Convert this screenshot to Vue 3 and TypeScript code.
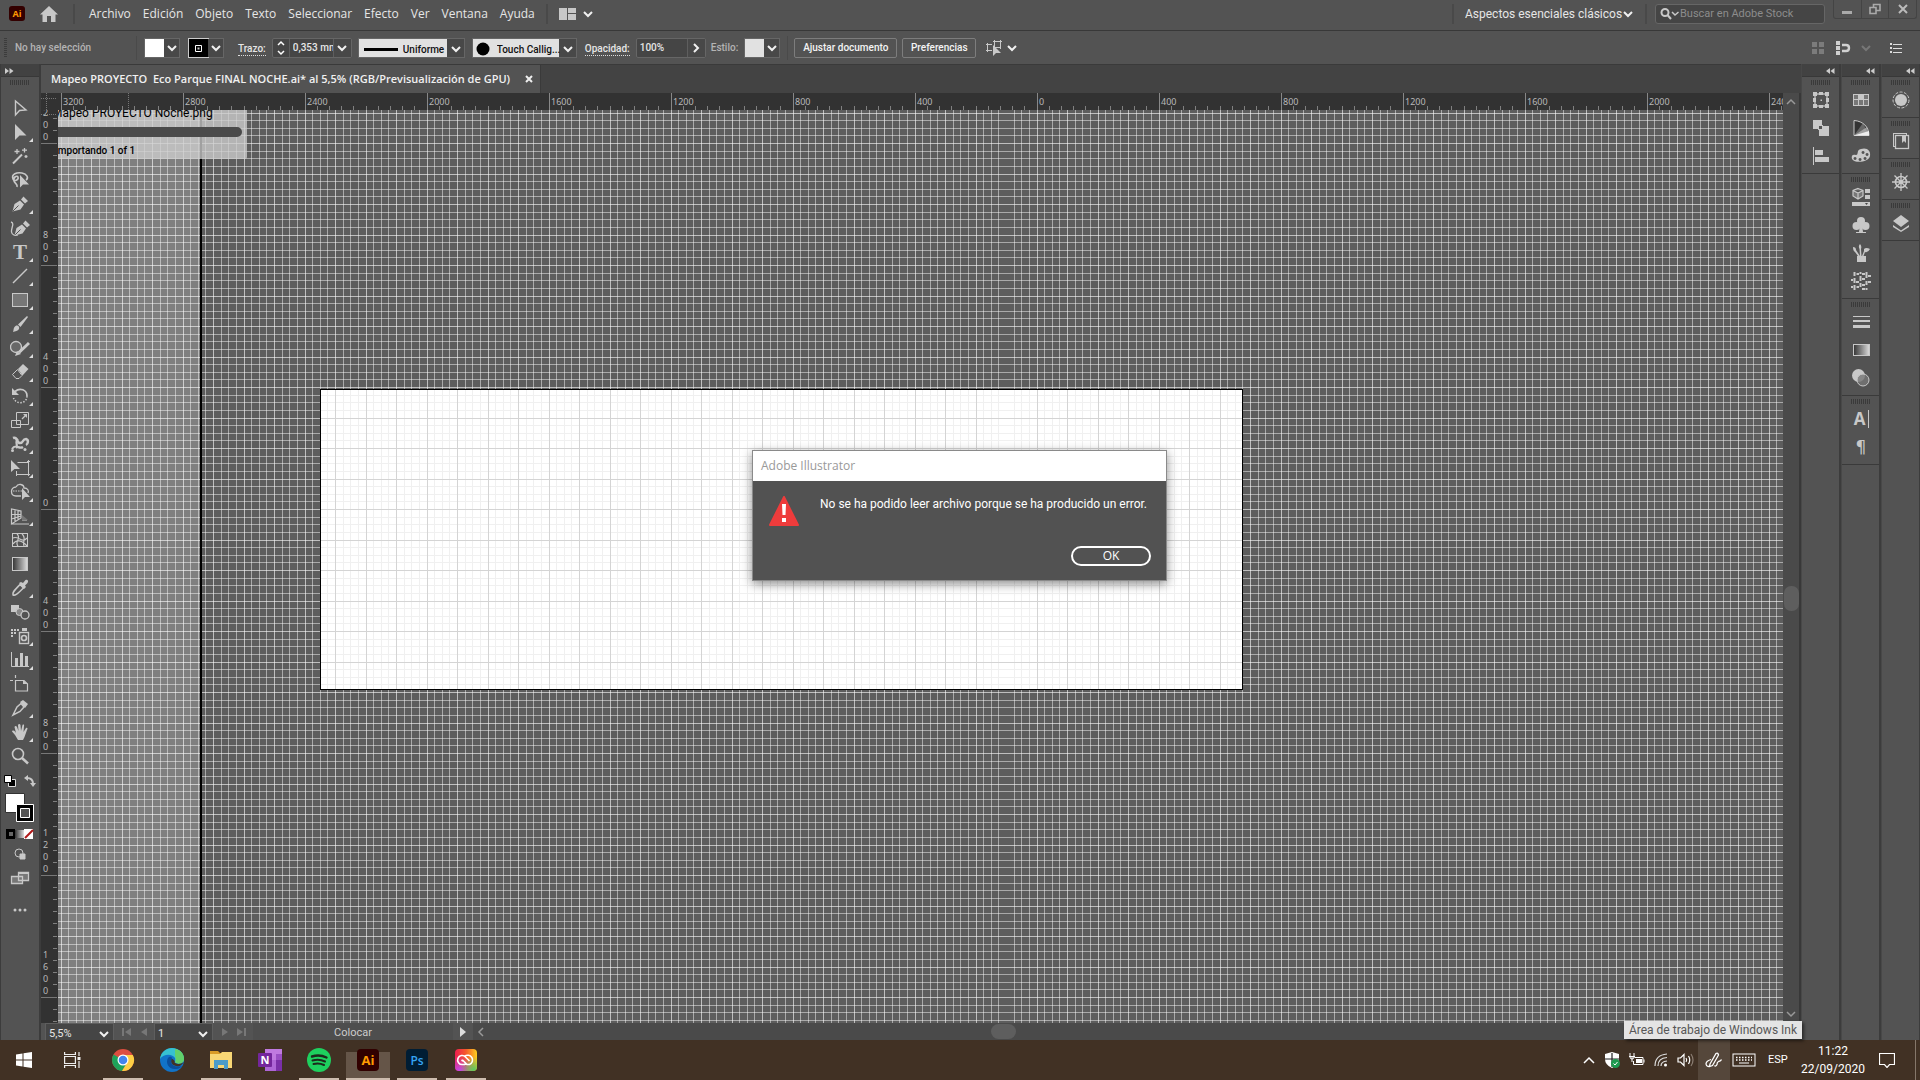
<script setup lang="ts">
interface Tool { name: string; icon: string; more?: boolean }
interface TaskApp { name: string; icon: string; open?: boolean; active?: boolean }

const F = 'fill="currentColor" stroke="none"'

const menus: string[] = ['Archivo', 'Edición', 'Objeto', 'Texto', 'Seleccionar', 'Efecto', 'Ver', 'Ventana', 'Ayuda']

const nib = 'M2.5 17.5L4.5 10L10 6.5L14 10.5L10.5 15.5ZM11 5.5L13.5 2.5L18 7L15 9.5Z'

const tools: Tool[] = [
  { name: 'Selección', icon: `<path stroke-width="1.4" d="M5.5 3V17L9.5 12.5L16 12Z"/>` },
  { name: 'Selección directa', more: true, icon: `<path ${F} d="M5 2V18L9.5 13.5H16.5Z"/>` },
  { name: 'Varita mágica', icon: `<path stroke-width="2" d="M3 17.5L12 8.5"/><path stroke-width="1.3" d="M7 3V8M4.5 5.5H9.5M14.5 2V6.5M12 4.2H17M16 9V12M14.5 10.5H17.5"/>` },
  { name: 'Lazo', icon: `<path stroke-width="1.6" d="M3 9C1 4 7 2 12 3C17 4 19 8 16 10M3 9C4 12 9 10 8 7C7 5 3 7 4 11C5 14 8 14 7 17"/><path ${F} d="M10 5V17.5L13 14.5H19Z"/>` },
  { name: 'Pluma', more: true, icon: `<path ${F} d="${nib}"/><path stroke="#535353" d="M3 17L8.5 11.5"/>` },
  { name: 'Curvatura', icon: `<g transform="translate(2 0)"><path ${F} d="${nib}"/><path stroke="#535353" d="M3 17L8.5 11.5"/></g><path stroke-width="1.3" d="M1 4C5 5 1 10 1.5 14C2 17 5 18 8 17"/>` },
  { name: 'Texto', more: true, icon: `<text x="10" y="17" text-anchor="middle" font-family="Liberation Serif, serif" font-weight="700" font-size="21" ${F}>T</text>` },
  { name: 'Segmento de línea', more: true, icon: `<path stroke-width="1.4" d="M3 17L17 3"/>` },
  { name: 'Rectángulo', more: true, icon: `<rect x="2.5" y="3.5" width="15" height="13" fill="#777"/>` },
  { name: 'Pincel', more: true, icon: `<path ${F} d="M3 18C4 16 3 14 5.5 12C8 10.5 10 13 9 15C8 17 5 17.5 3 18ZM8 10.5L17 2L18 3L10.5 13Z"/>` },
  { name: 'Shaper', more: true, icon: `<circle cx="6" cy="9" r="5.5" fill="#686868" stroke-width="1.3"/><path stroke-width="3" d="M9 14.5L19 5"/><path ${F} d="M5 18L7 13L11 16Z"/>` },
  { name: 'Borrador', more: true, icon: `<path ${F} d="M8 7L13 2L18.5 7L12.5 13.5Z"/><path d="M7.5 7.5L12 13.5L9 16.5H6L2.5 12.5Z"/>` },
  { name: 'Rotar', more: true, icon: `<path stroke-width="1.7" d="M5 5.5C10 1 17 4 17 10"/><path stroke-width="1.5" stroke-dasharray="1.5 1.5" d="M17 10C17 18 6 19 3.5 12"/><path ${F} d="M2 2V9H9Z"/>` },
  { name: 'Escala', more: true, icon: `<path d="M6.5 2.5H18.5V14.5H6.5ZM1.5 10.5H10.5V17.5H1.5Z"/><path stroke-width="1.3" d="M12 9L16 5"/><path ${F} d="M13 4H17V8Z"/>` },
  { name: 'Anchura', more: true, icon: `<path stroke-width="2.5" d="M3 4C8 2 6 9 10 9C14 9 12 5 16 5C19 6 18 10 16 11"/><path stroke-width="2.2" d="M2 15C6 9 9 16 13 13M8 5C4 9 9 11 6 14"/><circle ${F} cx="2.5" cy="16.5" r="1.5"/><circle ${F} cx="15" cy="15.5" r="1.5"/>` },
  { name: 'Transformación libre', more: true, icon: `<path ${F} d="M1 2V14L4.5 11H10Z"/><path d="M7.5 4.5H18.5V16.5H6.5V13M17 3.5h3M17 16.5h3M6.5 15v3M18.5 15v3M18.5 2v3"/>` },
  { name: 'Creador de formas', more: true, icon: `<path stroke-width="1.3" d="M6 5C0 5 0 14 6 14H11M6 5C8 1 14 2 14 6C18 6 19 9 18 11"/><path stroke-dasharray="1.5 1" d="M3 9H13"/><path ${F} d="M12 6V18L15 15H20Z"/>` },
  { name: 'Cuadrícula de perspectiva', more: true, icon: `<path stroke-width="1.2" d="M1.5 3V18L11 12V5ZM5 3.5V16M8 4V14M1.5 8.5L11 8.5M1.5 13L11 10M2 18H19M12 14H17"/><path fill="#777" stroke="none" d="M12 9L18 14H12Z"/>` },
  { name: 'Malla', icon: `<rect x="2.5" y="3.5" width="15" height="13"/><path stroke-width="1.2" d="M3 8C8 5 12 14 17 8M3 14C6 9 12 10 17 16M7 4C12 8 4 12 8 16M12 4C17 8 12 12 14 16"/>` },
  { name: 'Degradado', icon: `<rect x="2.5" y="3.5" width="15" height="13" fill="url(#grad-tool)"/>` },
  { name: 'Cuentagotas', more: true, icon: `<path stroke-width="1.5" d="M3 17C2 14 5 12 10 6.5L13.5 10C8 15 6 18 3 17Z"/><path ${F} d="M9 5L11 4L13 5L15.5 2C17.5 1 19 3 17.5 5L15 7.5L16 9L14 11Z"/>` },
  { name: 'Fusión', icon: `<rect ${F} x="1" y="3" width="8" height="7"/><circle cx="9.5" cy="10" r="3.5" fill="#888"/><circle cx="15" cy="13" r="4" fill="#535353" stroke-width="1.3"/>` },
  { name: 'Rociar símbolos', more: true, icon: `<rect x="9.5" y="6.5" width="9" height="11" stroke-width="1.4"/><circle cx="14" cy="12" r="2.5" stroke-width="1.7"/><path ${F} d="M12 2h5v3h-5zM1 3h2v2h-2zM4 3h2v2h-2zM7 3h2v2h-2zM1 6h2v2h-2zM4 6h2v2h-2zM1 9h2v2h-2z"/>` },
  { name: 'Gráfica de columnas', more: true, icon: `<path d="M1.5 2V16.5H19"/><path ${F} d="M5 8h3v8h-3zM10 3h3v13h-3zM15 6h3v10h-3z"/>` },
  { name: 'Mesa de trabajo', icon: `<path stroke-width="1.2" d="M5.5 1V4M0 6.5H3M5.5 6.5H14L17.5 10V17H5.5Z"/><path ${F} d="M13 6V10H18Z"/>` },
  { name: 'Sector', more: true, icon: `<path stroke-width="1.5" d="M3 17L7 9L11 5.5L14 9L10 13.5Z"/><path ${F} d="M10 4L13 2L18 6L15 10Z"/>` },
  { name: 'Mano', more: true, icon: `<path ${F} d="M8 18L5 13L2 9.5C2 8 4 8 5 9.5L6 11L4.5 5C5 3.5 6.5 4 7 5L8.5 9L8 3C8.5 1.5 10 1.5 10.5 3L11 9L12.5 3C13.5 2 14.5 3 14 4L13.5 10L16 6C17.5 5 18 6.5 17 8L14.5 15L13 18Z"/>` },
  { name: 'Zoom', icon: `<circle cx="8" cy="8" r="5.5" stroke-width="1.6"/><path stroke-width="2.5" d="M12 12L18 17.5"/>` },
]

const dockIcons = {
  transform: `<rect x="4" y="4" width="12" height="12" stroke-width="1.3"/><path ${F} d="M2 2h4v4h-4zM8 2h4v3h-4zM14 2h4v4h-4zM2 8h3v4h-3zM15 8h3v4h-3zM2 14h4v4h-4zM8 15h4v3h-4zM14 14h4v4h-4zM9.5 9.5h1.5v1.5h-1.5z"/>`,
  pathfinder: `<path ${F} d="M2 2H11V7H8V11H2ZM12 8H18V18H8V12H12Z"/><rect x="7.5" y="7.5" width="4" height="4"/>`,
  align: `<path d="M2.5 1V19"/><path ${F} d="M4 4h8v5h-8zM4 11h14v5h-14z"/>`,
  swatches: `<rect x="2" y="4" width="16" height="12" ${F}/><path fill="#777" stroke="none" d="M3 5h4v4h-4zM13 5h4v4h-4zM8 10h4v5h-4zM3 10h4v5h-4zM13 10h4v5h-4z"/>`,
  guide: `<path d="M3 2.5V17.5H18C18 9 12 3 3 2.5Z" fill="#333"/><path ${F} d="M3 17.5L12 5L18 17.5Z" opacity=".35"/><path ${F} d="M3 17.5L16 9L18 17.5Z" opacity=".6"/><path fill="#eee" stroke="none" d="M3 17.5L18 13L18 17.5Z"/>`,
  palette: `<path fill-rule="evenodd" ${F} d="M1 13C0 9 2 8 5 9C8 9 5 4 10 3C16 1 20 5 19 10C18 16 4 18 1 13ZM12 5a1.5 1.5 0 1 0 .1 0ZM16 7a1.5 1.5 0 1 0 .1 0ZM4 11a1.5 1.5 0 1 0 .1 0ZM9 12a1.5 1.5 0 1 0 .1 0ZM14 11a1.5 1.5 0 1 0 .1 0Z"/>`,
  library: `<path stroke-width="1.2" fill="#777" d="M7 1.5L12 3.5V9L7 12L2 9V3.5ZM2 3.5L7 6L12 3.5M7 6V12"/><path ${F} d="M14 2h5v4h-5zM14 8h5v4h-5zM1 15h18v4h-18z"/><path fill="#444" stroke="none" d="M14 16h3l-1.5 2z"/>`,
  symbols: `<circle ${F} cx="10" cy="6" r="4"/><circle ${F} cx="5.5" cy="11" r="4"/><circle ${F} cx="14.5" cy="11" r="4"/><path ${F} d="M9 9h2l1 8h3v1h-10v-1h3z"/>`,
  brushes: `<path ${F} d="M6 13h9v6h-9zM2 4Q5 4 5 7L9 13H7L4 9Q2 8 2 4ZM9 1Q11 3 10 6L10.500 13H9L8.500 6Q7 3 9 1ZM13 6Q15 4 19 6Q17 10 14 9L12.500 13H11L13 8Z"/>`,
  pattern: `<path stroke-width="2" d="M3.5 1V5M3.5 7V12M3.5 14V19M9.500 1V3M9.500 5V10M9.500 12V16M15.500 1V7M15.500 10V14M15.500 17V19M5.500 3H8M11 3H14M17 5H20M0 9H2M5 11H8M11 8H14M17 11H20M0 16H2M5.500 16H8M11 14H14M11 18H14"/>`,
  stroke: `<path ${F} d="M2 4h17v1h-17zM2 8h17v2h-17zM2 13h17v3h-17z"/>`,
  gradient: `<rect x="2.5" y="4.5" width="16" height="11" fill="url(#grad-tool)"/>`,
  transparency: `<circle ${F} cx="7.5" cy="7.5" r="6.5"/><circle cx="12" cy="12" r="6" fill="#777" fill-opacity=".8"/>`,
  character: `<text x="8.5" y="16" text-anchor="middle" font-family="Open Sans, sans-serif" font-weight="700" font-size="17" ${F}>A</text><path d="M17.5 1V19"/>`,
  paragraph: `<text x="10" y="15.5" text-anchor="middle" font-family="DejaVu Sans, sans-serif" font-size="17" ${F}>¶</text>`,
  appearance: `<circle ${F} cx="10" cy="10" r="6"/><circle cx="10" cy="10" r="8" stroke-dasharray="3 1.5"/>`,
  styles: `<rect x="2.5" y="2.5" width="13" height="13"/><rect x="4.5" y="4.5" width="13" height="13" fill="#535353" stroke-width="1.3"/><path ${F} d="M11 4h4v8l-2-2-2 2z"/>`,
  navigator: `<circle cx="10" cy="10" r="5.5" stroke-width="1.7"/><circle ${F} cx="10" cy="10" r="2"/><path stroke-width="1.3" d="M10 1V19M1 10H19M3.5 3.5L16.5 16.5M16.5 3.5L3.5 16.5"/>`,
  layers: `<path ${F} d="M10 2L18 8L10 14L2 8ZM2 12L10 17.5L18 12V14L10 19L2 14Z"/>`,
}
type DockIcon = keyof typeof dockIcons

const docks: DockIcon[][][] = [
  [['transform', 'pathfinder', 'align']],
  [['swatches', 'guide', 'palette'], ['library', 'symbols', 'brushes', 'pattern'], ['stroke', 'gradient', 'transparency'], ['character', 'paragraph']],
  [['appearance'], ['styles'], ['navigator'], ['layers']],
]

const apps: TaskApp[] = [
  { name: 'Google Chrome', open: true, icon: `<circle cx="12" cy="12" r="11" fill="#dc4e40"/><path fill="#1ea25a" d="M12 12L2.5 6.5A11 11 0 0 0 11 23L16 15Z"/><path fill="#fdce44" d="M12 7H21.8A11 11 0 0 1 11 23L16.5 14Z"/><circle cx="12" cy="12" r="5.5" fill="#fff"/><circle cx="12" cy="12" r="4.3" fill="#4384ec"/>` },
  { name: 'Microsoft Edge', icon: `<circle cx="12" cy="12" r="12" fill="#1173c8"/><path fill="#37c1d0" d="M0 11C1 4 6 0 12 0C19 0 24 5 24 11C24 15 20 17 16 15C14 14 16 13 15 10C13 6 4 5 0 11Z"/><path fill="#62d06a" d="M15 1C21 2 24 6 24 11C24 15 20 17 16 15C14 14 17 12 15 8Z"/><path fill="#0b4f9c" d="M8 10C5 15 9 22 16 21C19 21 21 19 22 18C19 19 14 19 12 16C10 13 13 12 12 10C11 8 9 9 8 10Z"/><path fill="#423225" d="M12 11C10 14 12 17 16 18C20 19 22 17 23.5 14C20 17 16 16 14.5 14.5C15.5 13 13 11 12 11Z"/>` },
  { name: 'Explorador de archivos', open: true, icon: `<path fill="#d99c28" d="M1 3H9L11 5H14V8H1Z"/><path fill="#f8d775" d="M1 6H11L13 4H23V20H1Z"/><path fill="#4c9cc9" d="M5 12H19V21H15V17H9V21H5Z"/>` },
  { name: 'OneNote', icon: `<path fill="#c07ae0" d="M7 1H24V23H7Z"/><path fill="#9a4fc4" d="M18 6H24V12H18Z"/><path fill="#7a2fa8" d="M18 12H24V23H18Z"/><path fill="#ae66d6" d="M7 12H18V23H7Z"/><rect x="0" y="5" width="14" height="14" rx="1" fill="#74269c"/><text x="7" y="16" text-anchor="middle" font-family="Open Sans, sans-serif" font-weight="700" font-size="11" fill="#fff">N</text>` },
  { name: 'Spotify', open: true, icon: `<circle cx="12" cy="12" r="12" fill="#1ed05e"/><path fill="none" stroke="#1c2a1c" stroke-linecap="round" stroke-width="2.4" d="M5 8.5Q12.5 6 19.5 9.5"/><path fill="none" stroke="#1c2a1c" stroke-linecap="round" stroke-width="2" d="M5.5 12.5Q12 10.5 18 13.5M6.5 16Q12 14.5 17 17"/>` },
  { name: 'Adobe Illustrator', open: true, active: true, icon: `<rect x="1" y="1" width="22" height="22" rx="4" fill="#310000"/><text x="12" y="16.5" text-anchor="middle" font-family="Open Sans, sans-serif" font-weight="700" font-size="13" fill="#ff9a00">Ai</text>` },
  { name: 'Adobe Photoshop', open: true, icon: `<rect x="1" y="1" width="22" height="22" rx="4" fill="#001d34"/><text x="12" y="16.5" text-anchor="middle" font-family="Open Sans, sans-serif" font-weight="600" font-size="12" fill="#35a5f5">Ps</text>` },
  { name: 'Creative Cloud', open: true, icon: `<rect x="1" y="1" width="22" height="22" rx="4" fill="url(#grad-cc)"/><rect x="1" y="1" width="22" height="22" rx="4" fill="url(#grad-cc-blue)"/><rect x="1" y="1" width="22" height="22" rx="4" fill="url(#grad-cc-green)"/><path fill="none" stroke="#fff" stroke-width="1.6" d="M12 15.500L10.500 16.500H8.500A4.500 4.500 0 1 1 11.500 9L15.500 13M9 13L7.500 12M10.500 8.500A4.800 4.800 0 1 1 15.500 16.500H13L8.500 12"/>` },
]

const CHEVRON = 'M1 2L5 6L9 2'

/* Document grid: 400 mm span 122 px, divided in 4 major and 16 minor cells. */
const STEP = 122 / 16
const ORIGIN = { x: 3, y: 155 }
const EXTENT = 4000

function lines(major: boolean, skip: number[] = []): string {
  let d = ''
  for (let k = -21; k * STEP < EXTENT; k++) {
    if ((k % 4 === 0) !== major) continue
    const x = Math.floor(ORIGIN.x + k * STEP) + 0.5
    const y = Math.round(ORIGIN.y + k * STEP) + 0.5
    if (x > 0 && !skip.includes(k)) d += `M${x} 0V${EXTENT}`
    if (y > 0) d += `M0 ${y}H${EXTENT}`
  }
  return d
}
const gridMinor = lines(false)
const gridMajor = lines(true, [124])

const hMarks = Array.from({ length: 15 }, (_, i) => ({ x: 3 + i * 122, label: String(Math.abs(3200 - i * 400)) }))
const vMarks = Array.from({ length: 8 }, (_, i) => ({ y: 33 + i * 122, digits: String(Math.abs(1200 - i * 400)).split('') }))
const hTicks = Array.from({ length: 300 }, (_, i) => `M${Math.floor(3 + i * 12.2) + 0.5} 13V17`).join('')
const vTicks = Array.from({ length: 200 }, (_, i) => `M12 ${Math.floor(33 + (i - 2) * 12.2) + 0.5}H16`).join('')
</script>

<template>
  <div class="app">
    <svg class="defs" width="0" height="0" aria-hidden="true">
      <defs>
        <linearGradient id="grad-tool"><stop offset="0" stop-color="#333" /><stop offset="1" stop-color="#ddd" /></linearGradient>
        <linearGradient id="grad-cc"><stop offset="0" stop-color="#ee1c50" /><stop offset=".5" stop-color="#f55a2a" /><stop offset="1" stop-color="#ffd020" /></linearGradient>
        <radialGradient id="grad-cc-blue" cx=".2" cy="1" r=".7"><stop offset="0" stop-color="#c04af0" /><stop offset="1" stop-color="#c04af0" stop-opacity="0" /></radialGradient>
        <radialGradient id="grad-cc-green" cx=".85" cy=".95" r=".6"><stop offset="0" stop-color="#5ac860" /><stop offset="1" stop-color="#5ac860" stop-opacity="0" /></radialGradient>
      </defs>
    </svg>

    <header class="menubar">
      <svg class="logo" viewBox="0 0 16 16" width="16" height="16">
        <rect width="16" height="15" rx="3" fill="#330000" />
        <text x="8" y="11" text-anchor="middle" font-family="Open Sans, sans-serif" font-weight="700" font-size="9" fill="#ff9a00">Ai</text>
      </svg>
      <button class="plain home" aria-label="Inicio">
        <svg viewBox="0 0 18 16" width="18" height="16"><path d="M9 0L18 8.500H15.500V16H11V10H7V16H2.500V8.500H0Z" fill="#c8c8c8" /></svg>
      </button>
      <i class="vsep"></i>
      <nav class="menus"><button v-for="m in menus" :key="m" class="plain">{{ m }}</button></nav>
      <i class="vsep"></i>
      <button class="plain arrange" aria-label="Organizar documentos">
        <svg viewBox="0 0 17 12" width="17" height="12" fill="#c8c8c8"><path d="M0 0h8v12h-8zM9 0h8v5h-8zM9 6h8v6h-8z" /></svg>
        <svg class="chev" viewBox="0 0 10 8"><path :d="CHEVRON" /></svg>
      </button>
      <div class="spacer"></div>
      <i class="vsep"></i>
      <div class="pick workspace">
        <select aria-label="Espacio de trabajo"><option>Aspectos esenciales clásicos</option></select>
        <svg class="chev" viewBox="0 0 10 8"><path :d="CHEVRON" /></svg>
      </div>
      <i class="vsep"></i>
      <label class="search">
        <svg viewBox="0 0 20 12" width="20" height="12" fill="none" stroke="#c8c8c8" stroke-width="2"><circle cx="5" cy="4.500" r="3.500" /><path d="M7.500 7L11 11" /><path stroke-width="1.500" d="M12 4L15 7L18.500 4" /></svg>
        <input type="text" placeholder="Buscar en Adobe Stock" aria-label="Buscar en Adobe Stock" />
      </label>
      <div class="winctl">
        <button class="plain" aria-label="Minimizar"><svg viewBox="0 0 12 12" width="12" height="12"><path d="M1 8h10v3h-10z" fill="#aaa" /></svg></button>
        <button class="plain" aria-label="Restaurar"><svg viewBox="0 0 12 12" width="12" height="12" fill="none" stroke="#aaa" stroke-width="1.600"><path d="M4.500 4V1.500H11V7.500H7.500M1 4.500H7V10.500H1Z" /></svg></button>
        <button class="plain" aria-label="Cerrar"><svg viewBox="0 0 12 12" width="12" height="12" stroke="#bbb" stroke-width="2"><path d="M2 2L10 10M10 2L2 10" /></svg></button>
      </div>
    </header>

    <section class="control">
      <i class="vgrip"></i>
      <span class="status-sel">No hay selección</span>
      <i class="csep"></i>
      <button class="swatch" aria-label="Relleno"><span class="sw white"></span><span class="drop"><svg class="chev" viewBox="0 0 10 8"><path :d="CHEVRON" /></svg></span></button>
      <button class="swatch second" aria-label="Color de trazo"><span class="sw black"><svg viewBox="0 0 9 9" width="9" height="9"><path d="M1.500 1.500h6v6h-6z" fill="#000" stroke="#fff" /><path d="M3.500 3.500h2v2h-2z" fill="#ccc" /></svg></span><span class="drop"><svg class="chev" viewBox="0 0 10 8"><path :d="CHEVRON" /></svg></span></button>
      <label class="dotted l-trazo" for="weight">Trazo:</label>
      <div class="field weight">
        <button class="plain spin" aria-label="Ajustar grosor"><svg viewBox="0 0 10 16" width="10" height="16"><path d="M2 5L5 2L8 5M2 11L5 14L8 11" fill="none" stroke="#fff" stroke-width="1.500" /></svg></button>
        <input id="weight" type="text" value="0,353 mm" />
        <button class="plain drop" aria-label="Grosores"><svg class="chev" viewBox="0 0 10 8"><path :d="CHEVRON" /></svg></button>
      </div>
      <div class="pick profile">
        <svg class="line" viewBox="0 0 34 4" width="34" height="4"><path d="M0 1h34v3h-34z" /></svg>
        <select aria-label="Perfil de anchura"><option>Uniforme</option></select>
        <svg class="chev" viewBox="0 0 10 8"><path :d="CHEVRON" /></svg>
      </div>
      <div class="pick brush">
        <svg class="line" viewBox="0 0 14 14" width="14" height="14"><circle cx="7" cy="7" r="6.500" /></svg>
        <select aria-label="Definición de pincel"><option>Touch Callig...</option></select>
        <svg class="chev" viewBox="0 0 10 8"><path :d="CHEVRON" /></svg>
      </div>
      <label class="dotted l-opac" for="opacity">Opacidad:</label>
      <div class="field opacity">
        <input id="opacity" type="text" value="100%" />
        <button class="plain drop" aria-label="Opacidades"><svg class="chev right" viewBox="0 0 10 8"><path :d="CHEVRON" /></svg></button>
      </div>
      <span class="l-estilo">Estilo:</span>
      <button class="swatch" aria-label="Estilo gráfico"><span class="sw grey"></span><span class="drop"><svg class="chev" viewBox="0 0 10 8"><path :d="CHEVRON" /></svg></span></button>
      <i class="csep thin"></i>
      <button class="push doc">Ajustar documento</button>
      <button class="push prefs">Preferencias</button>
      <button class="plain similar" aria-label="Seleccionar objetos similares">
        <svg viewBox="0 0 17 16" width="17" height="16"><path d="M8.500 1.500h6v6h-6zM7 1.500h9M8.500 0v9M14.500 0v9M6 4.500H1.500v6H6M0 4.500h3M0 10.500h3M1.500 3v9" fill="none" stroke="#c8c8c8" /><path d="M7 5V16L10 13H15Z" fill="#c8c8c8" /></svg>
        <svg class="chev" viewBox="0 0 10 8"><path :d="CHEVRON" /></svg>
      </button>
      <div class="spacer"></div>
      <div class="ctl-right">
        <svg viewBox="0 0 14 14" width="14" height="14" fill="#7c7c7c"><path d="M1 1h5v5h-5zM8 1h5v5h-5zM1 8h5v5h-5zM8 8h5v5h-5z" /></svg>
        <svg viewBox="0 0 16 14" width="16" height="14" fill="#d0d0d0"><path d="M1 0h4v4h-4zM1 5h4v4h-4zM1 10h4v4h-4z" /><path d="M7 4H11Q14 4 14 7T11 10H7" fill="none" stroke="#d0d0d0" stroke-width="2.400" /></svg>
        <svg class="chev dim" viewBox="0 0 10 8"><path :d="CHEVRON" /></svg>
        <svg class="list" viewBox="0 0 12 10" width="12" height="10" fill="#ddd"><path d="M0 0h2v2h-2zM3 1h9v1h-9zM0 4h2v2h-2zM3 5h9v1h-9zM0 8h2v2h-2zM3 9h9v1h-9z" /></svg>
      </div>
    </section>

    <main class="work">
      <aside class="toolbar">
        <div class="strip left"><svg viewBox="0 0 9 6" width="9" height="6"><path d="M0 0L4 3L0 6ZM4.500 0L8.500 3L4.500 6Z" fill="#ccc" /></svg></div>
        <i class="grip"></i>
        <button v-for="t in tools" :key="t.name" class="tool" :aria-label="t.name">
          <svg class="ico" viewBox="0 0 20 20" width="20" height="20" v-html="t.icon"></svg>
          <i v-if="t.more" class="more"></i>
        </button>
        <div class="defaults">
          <svg viewBox="0 0 12 12" width="12" height="12"><path d="M4.500 4.500h7v7h-7z" fill="#000" stroke="#ddd" /><path d="M.5.5h7v7h-7z" fill="#fff" stroke="#000" /></svg>
          <svg viewBox="0 0 12 12" width="12" height="12"><path d="M3 3Q9 3 9 9" fill="none" stroke="#c8c8c8" stroke-width="2" /><path d="M4 0V6L0 3ZM6 8H12L9 12Z" fill="#c8c8c8" /></svg>
        </div>
        <svg class="paint" viewBox="0 0 30 30" width="30" height="30"><path d="M.5.5h19v19h-19z" fill="#fff" stroke="#333" /><path d="M11.500 11.500h17v17h-17z" fill="#000" stroke="#fff" /><path d="M15.500 15.500h9v9h-9z" fill="#535353" stroke="#fff" /></svg>
        <svg class="modes" viewBox="0 0 28 10" width="28" height="10"><path d="M0 0h9v10h-9z" fill="#000" /><path d="M3 3h4v4h-4z" fill="#666" /><path d="M9 1h9v8h-9z" fill="url(#grad-tool)" /><path d="M18 0h9v10h-9z" fill="#fff" /><path d="M19 9L27 1" stroke="#b01818" stroke-width="2" /></svg>
        <button class="tool" aria-label="Modo de dibujo"><svg class="ico" viewBox="0 0 20 20" width="20" height="20"><circle cx="9" cy="9" r="4" /><path d="M10 10h5v5h-5z" fill="currentColor" /></svg></button>
        <button class="tool" aria-label="Modo de pantalla"><svg class="ico" viewBox="0 0 20 20" width="20" height="20"><path d="M1.500 8.500h11v7h-11zM8.500 4.500h10v8h-10z" fill="#777" stroke-width="1.300" /><path d="M8 4h11v2h-11z" fill="currentColor" stroke="none" /></svg></button>
        <button class="tool dots" aria-label="Editar barra de herramientas"><svg viewBox="0 0 14 4" width="14" height="4" fill="#c8c8c8"><circle cx="2" cy="2" r="1.500" /><circle cx="7" cy="2" r="1.500" /><circle cx="12" cy="2" r="1.500" /></svg></button>
      </aside>

      <section class="doc-area">
        <div class="tabs">
          <div class="tab"><span>Mapeo PROYECTO&nbsp; Eco Parque FINAL NOCHE.ai* al 5,5% (RGB/Previsualización de GPU)</span>
            <button class="plain" aria-label="Cerrar documento"><svg viewBox="0 0 8 8" width="8" height="8" stroke="#eee" stroke-width="2"><path d="M1 1L7 7M7 1L1 7" /></svg></button></div>
        </div>
        <div class="view">
          <svg class="corner" width="16" height="17"><path d="M0 5.500H16M5.500 0V17" stroke="#777" stroke-dasharray="1 1" fill="none" /></svg>
          <svg class="hruler" height="17">
            <path :d="hTicks" stroke="#808080" />
            <g v-for="m in hMarks" :key="m.x"><path :d="`M${m.x + 0.5} 0V17`" stroke="#888" /><text :x="m.x + 2" y="12">{{ m.label }}</text></g>
            <path d="M70.500 0V17" stroke="#777" stroke-dasharray="1 1" />
          </svg>
          <svg class="vruler" width="16">
            <path :d="vTicks" stroke="#808080" />
            <g v-for="m in vMarks" :key="m.y"><path :d="`M0 ${m.y + 0.5}H16`" stroke="#777" /><text v-for="(c, i) in m.digits" :key="i" x="2" :y="m.y - 3 - (m.digits.length - 1 - i) * 12">{{ c }}</text></g>
            <path d="M0 4.500H16" stroke="#777" stroke-dasharray="1 1" />
          </svg>
          <div class="canvas">
            <svg class="sheet" width="100%" height="100%">
              <rect width="100%" height="100%" fill="#5d5d5d" />
              <rect width="142" height="100%" fill="#7f7f7f" />
              <path :d="gridMinor" stroke="#fff" stroke-opacity=".47" />
              <path :d="gridMajor" stroke="#fff" stroke-opacity=".6" />
              <rect x="142" width="2" height="100%" fill="#000" />
              <clipPath id="board"><rect x="262" y="279" width="923" height="301" /></clipPath>
              <g clip-path="url(#board)">
                <rect x="262" y="279" width="923" height="301" fill="#fff" />
                <path :d="gridMinor" stroke="#f0f0f0" />
                <path :d="gridMajor" stroke="#d4d4d4" />
              </g>
              <rect x="262.500" y="279.500" width="922" height="300" fill="none" stroke="#000" />
            </svg>
            <div class="import">
              <p class="file">Mapeo PROYECTO Noche.png</p>
              <div class="progress"></div>
              <p class="count">Importando 1 of 1</p>
            </div>
          </div>
          <div class="vscroll">
            <svg class="chev up" viewBox="0 0 10 8"><path :d="CHEVRON" /></svg>
            <i class="vthumb"></i>
            <svg class="chev" viewBox="0 0 10 8"><path :d="CHEVRON" /></svg>
          </div>
        </div>
        <footer class="statusbar">
          <div class="pick zoomlvl"><select aria-label="Nivel de zoom"><option>5,5%</option></select><svg class="chev" viewBox="0 0 10 8"><path :d="CHEVRON" /></svg></div>
          <svg class="nav" viewBox="0 0 26 8" width="26" height="8"><path d="M0 0h2v8h-2zM9 0V8L3 4ZM25 0V8L19 4Z" /></svg>
          <div class="pick page"><select aria-label="Mesa de trabajo"><option>1</option></select><svg class="chev" viewBox="0 0 10 8"><path :d="CHEVRON" /></svg></div>
          <svg class="nav" viewBox="0 0 26 8" width="26" height="8"><path d="M1 0V8L7 4ZM16 0V8L22 4ZM23 0h2v8h-2z" /></svg>
          <span class="task">Colocar</span>
          <button class="plain play" aria-label="Opciones de estado"><svg viewBox="0 0 6 10" width="6" height="10"><path d="M0 0L6 5L0 10Z" fill="#ddd" /></svg></button>
          <div class="hscroll"><svg class="chev left" viewBox="0 0 10 8"><path :d="CHEVRON" /></svg><i class="hthumb"></i></div>
        </footer>
      </section>

      <aside class="docks">
        <div v-for="(dock, d) in docks" :key="d" class="dock">
          <div class="strip"><svg viewBox="0 0 9 6" width="9" height="6"><path d="M4 0L0 3L4 6ZM8.500 0L4.500 3L8.500 6Z" fill="#ccc" /></svg></div>
          <div v-for="(group, g) in dock" :key="g" class="group">
            <i class="grip"></i>
            <button v-for="name in group" :key="name" class="panel" :aria-label="name">
              <svg class="ico" viewBox="0 0 20 20" width="20" height="20" v-html="dockIcons[name]"></svg>
            </button>
          </div>
        </div>
      </aside>
    </main>

    <footer class="taskbar">
      <button class="plain start" aria-label="Inicio de Windows"><svg viewBox="0 0 16 16" width="16" height="16" fill="#fff"><path d="M0 2.500L6.500 1.500V7.500H0ZM7.500 1.300L16 0V7.500H7.500ZM0 8.500H6.500V14.500L0 13.500ZM7.500 8.500H16V16L7.500 14.700Z" /></svg></button>
      <button class="plain view-btn" aria-label="Vista de tareas"><svg viewBox="0 0 17 16" width="17" height="16" fill="none" stroke="#eee" stroke-width="1.200"><path d="M.600 0V2.500H11.400V0M.600 16V13.500H11.400V16M.600 4.500H11.400V11.500H.600ZM15 0V4M15 9V16" /><path d="M13.500 5h3v3h-3z" fill="#eee" stroke="none" /></svg></button>
      <button v-for="a in apps" :key="a.name" class="app-btn" :class="{ open: a.open, active: a.active }" :aria-label="a.name">
        <svg viewBox="0 0 24 24" width="24" height="24" v-html="a.icon"></svg>
      </button>
      <div class="spacer"></div>
      <div class="tray">
        <svg viewBox="0 0 12 8" width="12" height="8"><path d="M1 7L6 2L11 7" fill="none" stroke="#fff" stroke-width="1.500" /></svg>
        <svg viewBox="0 0 16 16" width="16" height="16"><path d="M8 0L15 2V7Q15 13 8 16Q1 13 1 7V2Z" fill="#fff" /><path d="M8 1V15M1 7H15" stroke="#222" stroke-width="1.200" /><circle cx="11.500" cy="11.500" r="4.500" fill="#1e9a50" /><path d="M9.500 11.500L11 13L13.500 10" fill="none" stroke="#fff" /></svg>
        <svg viewBox="0 0 16 14" width="16" height="14"><path d="M5.500 4.500H14V11.500H4.500V8M15 6.500v3" fill="none" stroke="#fff" /><path d="M7 6h6v4h-6z" fill="#fff" /><path d="M1 0V3M5 0V3M0 3.500H6M3 4V9M1 4Q1 6 3 6Q5 6 5 4" fill="none" stroke="#fff" /></svg>
        <svg viewBox="0 0 14 14" width="14" height="14" fill="none" stroke="#ddd" stroke-width="1.200"><path d="M1 13Q1 2 13 1M4 13Q4 5 13 4.500M7 13Q7 8.500 13 8" /><circle cx="11.500" cy="12" r="1.500" fill="#fff" stroke="none" /></svg>
        <svg viewBox="0 0 17 14" width="17" height="14" fill="none" stroke="#fff" stroke-width="1.200"><path d="M1 5H3.500L7 1.500V12.500L3.500 9H1ZM9 5Q10.500 7 9 9M11.500 3Q14 7 11.500 11" /><path d="M14 1Q18 7 14 13" stroke="#8a7d72" /></svg>
        <span class="ink"><svg viewBox="0 0 18 16" width="18" height="16" fill="none" stroke="#fff" stroke-width="1.300"><path d="M5 12L11 1.500Q13 .500 13.500 3L7.500 13.500L4.500 14.500ZM6 7.500Q1 9 1 12Q1.500 16 7.500 13.500M9.500 13.500Q10.500 15 12 12.500Q12 10 13.500 9.500Q16 9 16.500 7.500" /></svg></span>
        <svg class="kbd" viewBox="0 0 24 14" width="24" height="14"><rect x="1" y="1" width="22" height="12" fill="none" stroke="#fff" /><path d="M4 4.500H20M4 7H20" stroke="#fff" stroke-width="1.400" stroke-dasharray="1.500 1.500" /><path d="M7 10H17" stroke="#fff" /></svg>
        <span class="lang">ESP</span>
        <time class="clock"><span>11:22</span><span>22/09/2020</span></time>
        <svg class="note" viewBox="0 0 16 16" width="16" height="16"><path d="M.500 1.500H15.500V12.500H10.500L8 15.500L5.500 12.500H.500Z" fill="none" stroke="#fff" stroke-width="1.200" /></svg>
        <i class="peek"></i>
      </div>
    </footer>

    <div class="tooltip" role="tooltip">Área de trabajo de Windows Ink</div>

    <section class="dialog" role="alertdialog" aria-labelledby="dlg-title" aria-describedby="dlg-text">
      <h1 id="dlg-title">Adobe Illustrator</h1>
      <div class="dlg-body">
        <svg class="warn" viewBox="0 0 30 30" width="30" height="30"><path d="M15 1L29 29H1Z" fill="#ee3c3c" stroke="#ee3c3c" stroke-width="2" stroke-linejoin="round" /><path d="M13 8h4l-.500 11h-3zM13 22h4v4h-4z" fill="#fff" /></svg>
        <p id="dlg-text">No se ha podido leer archivo porque se ha producido un error.</p>
        <button class="ok">OK</button>
      </div>
    </section>
  </div>
</template>

<style>
html, body, #app { height: 100%; }
body { margin: 0; overflow: hidden; }
</style>

<style scoped>
.app {
  position: relative;
  display: flex;
  flex-direction: column;
  height: 100%;
  background: #535353;
  color: #e6e6e6;
  font: 12px/16px "Open Sans", "Noto Sans", sans-serif;
}
.app *, .app *::before { box-sizing: border-box; }
.defs { position: absolute; }
button, input, select { font: inherit; color: inherit; margin: 0; border-radius: 0; outline: none; }
button { cursor: pointer; white-space: nowrap; }
p, h1 { margin: 0; font: inherit; }
svg { flex: none; display: block; }
.plain { background: none; border: 0; padding: 0; display: flex; align-items: center; justify-content: center; }
.spacer { flex: 1; }
.chev { width: 10px; height: 8px; fill: none; stroke: #f0f0f0; stroke-width: 2; }
.chev.right { transform: rotate(-90deg); }
.chev.left { transform: rotate(90deg); stroke: #999; }
.chev.up { transform: rotate(180deg); }
.chev.dim { stroke: #777; }

.menubar { display: flex; align-items: center; height: 31px; padding-bottom: 2px; border-bottom: 1px solid #383838; flex: none; }
.logo { margin-left: 9px; }
.home { margin: 0 15px; }
.vsep { width: 2px; height: 20px; background: #494949; flex: none; }
.menus { display: flex; gap: 12px; margin: 0 11px 0 14px; }
.arrange { gap: 7px; margin-left: 11px; }
.pick { display: grid; align-items: center; flex: none; }
.pick > * { grid-area: 1 / 1; }
.pick select { appearance: none; border: 0; background: none; padding: 0; width: 100%; }
.pick .chev { justify-self: end; pointer-events: none; }
.workspace { width: 168px; margin: 0 12px 0 11px; font-family: Roboto, "Open Sans", sans-serif; }
.search { display: flex; align-items: center; width: 170px; height: 20px; margin-left: 8px; padding: 0 4px; background: #454545; border: 1px solid #666; border-radius: 3px; }
.search input { flex: 1; min-width: 0; background: none; border: 0; padding: 0; font-family: Roboto, "Open Sans", sans-serif; font-size: 11px; }
.search input::placeholder { color: #8c8c8c; opacity: 1; }
.winctl { display: flex; align-self: flex-start; width: 84px; height: 19px; margin: 0 3px 0 8px; border: 1px solid #444; border-top: 0; border-radius: 0 0 3px 3px; }
.winctl button { flex: 1; }
.winctl button + button { border-left: 1px solid #444; }

.control { display: flex; align-items: center; height: 34px; padding-top: 1px; margin-bottom: -1px; border-bottom: 1px solid #383838; flex: none; font-family: Roboto, "Open Sans", sans-serif; font-size: 10px; font-weight: 500; }
.vgrip { width: 3px; height: 20px; margin: 0 8px 0 4px; background: repeating-linear-gradient(#3c3c3c 0 1px, transparent 1px 2px); }
.status-sel { width: 121px; color: #b4b4b4; }
.csep { width: 1px; height: 24px; margin-right: 7px; background: #4a4a4a; }
.csep.thin { margin: 0 6px 0 7px; }
.swatch { display: flex; width: 36px; height: 20px; padding: 0; border: 1px solid #666; background: none; }
.swatch.second { margin-left: 8px; }
.sw { width: 19px; height: 18px; display: grid; place-items: center; }
.sw.white { background: #fff; }
.sw.grey { background: #e1e1e1; }
.sw.black { background: #000; outline: 1px solid #ccc; }
.drop { flex: 1; display: flex; align-items: center; justify-content: center; background: #484848; align-self: stretch; }
.dotted { border-bottom: 1px dotted #ddd; line-height: 13px; }
.l-trazo { margin: 2px 6px 0 14px; }
.l-opac { margin: 2px 6px 0 8px; }
.l-estilo { margin: 0 6px 0 5px; color: #b4b4b4; }
.field { display: flex; height: 20px; border: 1px solid #666; border-radius: 2px; background: #454545; }
.field input { flex: 1; min-width: 0; border: 0; border-right: 1px solid #5e5e5e; background: none; padding: 0 0 0 3px; }
.weight { width: 80px; margin-right: 6px; }
.field .spin { width: 17px; border-right: 1px solid #5e5e5e; }
.field .drop { flex: none; width: 17px; }
.opacity { width: 70px; }
.profile, .brush { height: 20px; border: 1px solid #666; background: linear-gradient(to left, #484848 17px, #e1e1e1 17px); padding-right: 3px; }
.profile { width: 107px; }
.brush { width: 105px; margin-left: 7px; }
.profile select, .brush select { color: #111; line-height: 18px; padding-top: 2px; }
.profile select { padding-left: 44px; }
.brush select { padding-left: 24px; }
.pick .line { margin-left: 5px; pointer-events: none; }
.brush .line { margin-left: 3px; }
.push { height: 20px; padding: 0; border: 1px solid #7d7d7d; border-radius: 2px; background: none; color: #f4f4f4; text-align: center; }
.doc { width: 103px; }
.prefs { width: 74px; margin: 0 10px 0 5px; }
.similar { gap: 4px; }
.ctl-right { display: flex; align-items: center; gap: 10px; margin-right: 18px; }
.ctl-right .list { margin-left: 9px; }

.work { flex: 1; display: flex; min-height: 0; }
.toolbar { display: flex; flex-direction: column; align-items: center; width: 41px; flex: none; border-right: 2px solid #3c3c3c; border-left: 1px solid #3c3c3c; overflow: hidden; }
.strip { align-self: stretch; display: flex; align-items: center; justify-content: flex-end; height: 13px; padding: 1px 4px 0; background: #424242; border-bottom: 1px solid #383838; flex: none; }
.strip.left { justify-content: flex-start; }
.grip { flex: none; width: 20px; height: 5px; background: repeating-linear-gradient(90deg, #3a3a3a 0 1px, transparent 1px 2px); }
.toolbar > .grip { margin: 3px 0 11px; }
.tool { position: relative; width: 28px; height: 24px; padding: 0; border: 0; background: none; display: grid; place-items: center; flex: none; }
.ico { color: #c8c8c8; fill: none; stroke: currentColor; }
.more { position: absolute; right: 1px; bottom: 2px; width: 4px; height: 4px; background: #ddd; clip-path: polygon(100% 0, 100% 100%, 0 100%); }
.defaults { display: flex; gap: 8px; margin: 7px 0 6px; }
.paint { margin-bottom: 6px; }
.modes { margin-bottom: 3px; }
.dots { margin-top: 8px; }

.doc-area { flex: 1; min-width: 0; display: flex; flex-direction: column; }
.tabs { height: 29px; flex: none; background: #434343; border-top: 1px solid #3a3a3a; }
.tab { display: inline-flex; align-items: center; gap: 15px; height: 28px; padding: 0 7px 0 10px; background: #535353; border-right: 1px solid #3a3a3a; color: #f0f0f0; font-size: 11px; font-weight: 600; white-space: nowrap; }
.view { flex: 1; min-height: 0; display: grid; grid-template: 17px minmax(0, 1fr) / 17px minmax(0, 1fr) 18px; background: #323232; }
.hruler { width: 100%; overflow: hidden; }
.vruler { height: 100%; overflow: hidden; }
.hruler text, .vruler text { fill: #b8b8b8; stroke: none; font: 9px "Noto Sans", sans-serif; }
.canvas { position: relative; overflow: hidden; grid-area: 2 / 2; }
.sheet { position: absolute; inset: 0; }
.vscroll { grid-area: 1 / 3 / 3 / 4; display: flex; flex-direction: column; align-items: center; justify-content: space-between; padding: 5px 0; background: #4a4a4a; border-right: 2px solid #383838; }
.vscroll .chev, .hscroll .chev { stroke: #999; stroke-width: 1.5; }
.vthumb { width: 15px; height: 25px; margin-top: 80px; border-radius: 7px; background: #5e5e5e; }
.import { position: absolute; left: -8px; top: -12px; width: 197px; height: 61px; padding: 6px 5px 0 0; background: rgba(205, 205, 205, .78); border-radius: 0 0 2px 2px; color: #000; font-family: Roboto, "Open Sans", sans-serif; }
.file { padding-left: 2px; font-size: 12px; line-height: 18px; }
.progress { height: 10px; margin-top: 5px; border-radius: 5px; background: #4a4a4a; }
.count { margin-top: 6px; padding-left: 5px; font-size: 10px; font-weight: 500; line-height: 16px; }

.statusbar { display: flex; align-items: center; height: 17px; padding-left: 4px; flex: none; font-family: Roboto, "Open Sans", sans-serif; font-size: 11px; }
.zoomlvl, .page { height: 17px; background: #454545; border: 1px solid #5e5e5e; border-bottom: 0; padding: 2px 4px 0 3px; }
.zoomlvl { width: 69px; }
.page { width: 59px; }
.nav { margin: 0 6px 0 8px; fill: #777; }
.task { width: 200px; padding-top: 2px; line-height: 15px; text-align: center; color: #ccc; background: #4e4e4e; }
.play { width: 20px; }
.hscroll { flex: 1; position: relative; display: flex; align-items: center; align-self: stretch; padding-left: 3px; background: #4a4a4a; }
.hthumb { position: absolute; left: 39%; width: 25px; height: 15px; border-radius: 8px; background: #5e5e5e; }

.docks { display: flex; flex: none; }
.dock { width: 40px; border-right: 2px solid #3c3c3c; border-left: 1px solid #484848; }
.dock:last-child { width: 39px; border-right-width: 1px; }
.group { display: flex; flex-direction: column; align-items: center; padding: 3px 0; border-bottom: 1px solid #3a3a3a; }
.group .grip { margin-bottom: 1px; }
.panel { width: 28px; height: 28px; padding: 0; border: 0; background: none; display: grid; place-items: center; }

.taskbar { display: flex; height: 40px; flex: none; background: #413124; color: #fff; }
.start { width: 48px; }
.view-btn { width: 48px; }
.app-btn { position: relative; width: 44px; margin-left: 5px; padding: 0; border: 0; background: none; display: grid; place-items: center; }
.app-btn.open::before { content: ""; position: absolute; left: 2px; right: 2px; bottom: 0; height: 2px; background: #cdbcae; }
.app-btn.active { background: linear-gradient(transparent 12px, #655548 12px); }
.app-btn.active::before { left: 0; right: 0; }
.app-btn svg { position: relative; }
.tray { display: flex; align-items: center; gap: 9px; }
.ink { display: grid; place-items: center; width: 32px; align-self: stretch; margin: 0 -5px; background: #55473b; }
.kbd { margin-left: -2px; }
.lang { width: 20px; margin-left: 3px; }
.lang, .clock { font-size: 12px; font-family: Roboto, "Open Sans", sans-serif; }
.lang { font-size: 11px; }
.clock { display: flex; flex-direction: column; align-items: center; width: 64px; margin-left: 4px; line-height: 18px; }
.note { margin-left: 5px; }
.peek { width: 1px; align-self: stretch; margin: 0 4px 0 11px; background: #85776a; }

.tooltip { position: absolute; right: 118px; bottom: 41px; width: 178px; height: 18px; background: #e4e4e4; box-shadow: 2px 2px 3px rgba(0, 0, 0, .5); color: #575757; font-family: Roboto, "Open Sans", sans-serif; line-height: 18px; text-align: center; white-space: nowrap; }

.dialog { position: absolute; left: 50%; top: 450px; width: 415px; margin-left: -208px; border: 1px solid #8a8a8a; background: #525252; box-shadow: 0 3px 10px rgba(0, 0, 0, .45); }
.dialog h1 { height: 30px; padding-left: 8px; background: #fff; color: #999; line-height: 30px; }
.dlg-body { display: grid; grid-template-columns: 30px minmax(0, 1fr); column-gap: 21px; padding: 15px 15px 14px 16px; color: #fff; }
#dlg-text { font-family: Roboto, "Open Sans", sans-serif; white-space: nowrap; }
.warn { height: 30px; }
.ok { grid-column: 2; justify-self: end; width: 80px; height: 20px; margin-top: 20px; padding: 0; border: 2px solid #fff; border-radius: 10px; background: none; color: #fff; line-height: 16px; }
</style>
